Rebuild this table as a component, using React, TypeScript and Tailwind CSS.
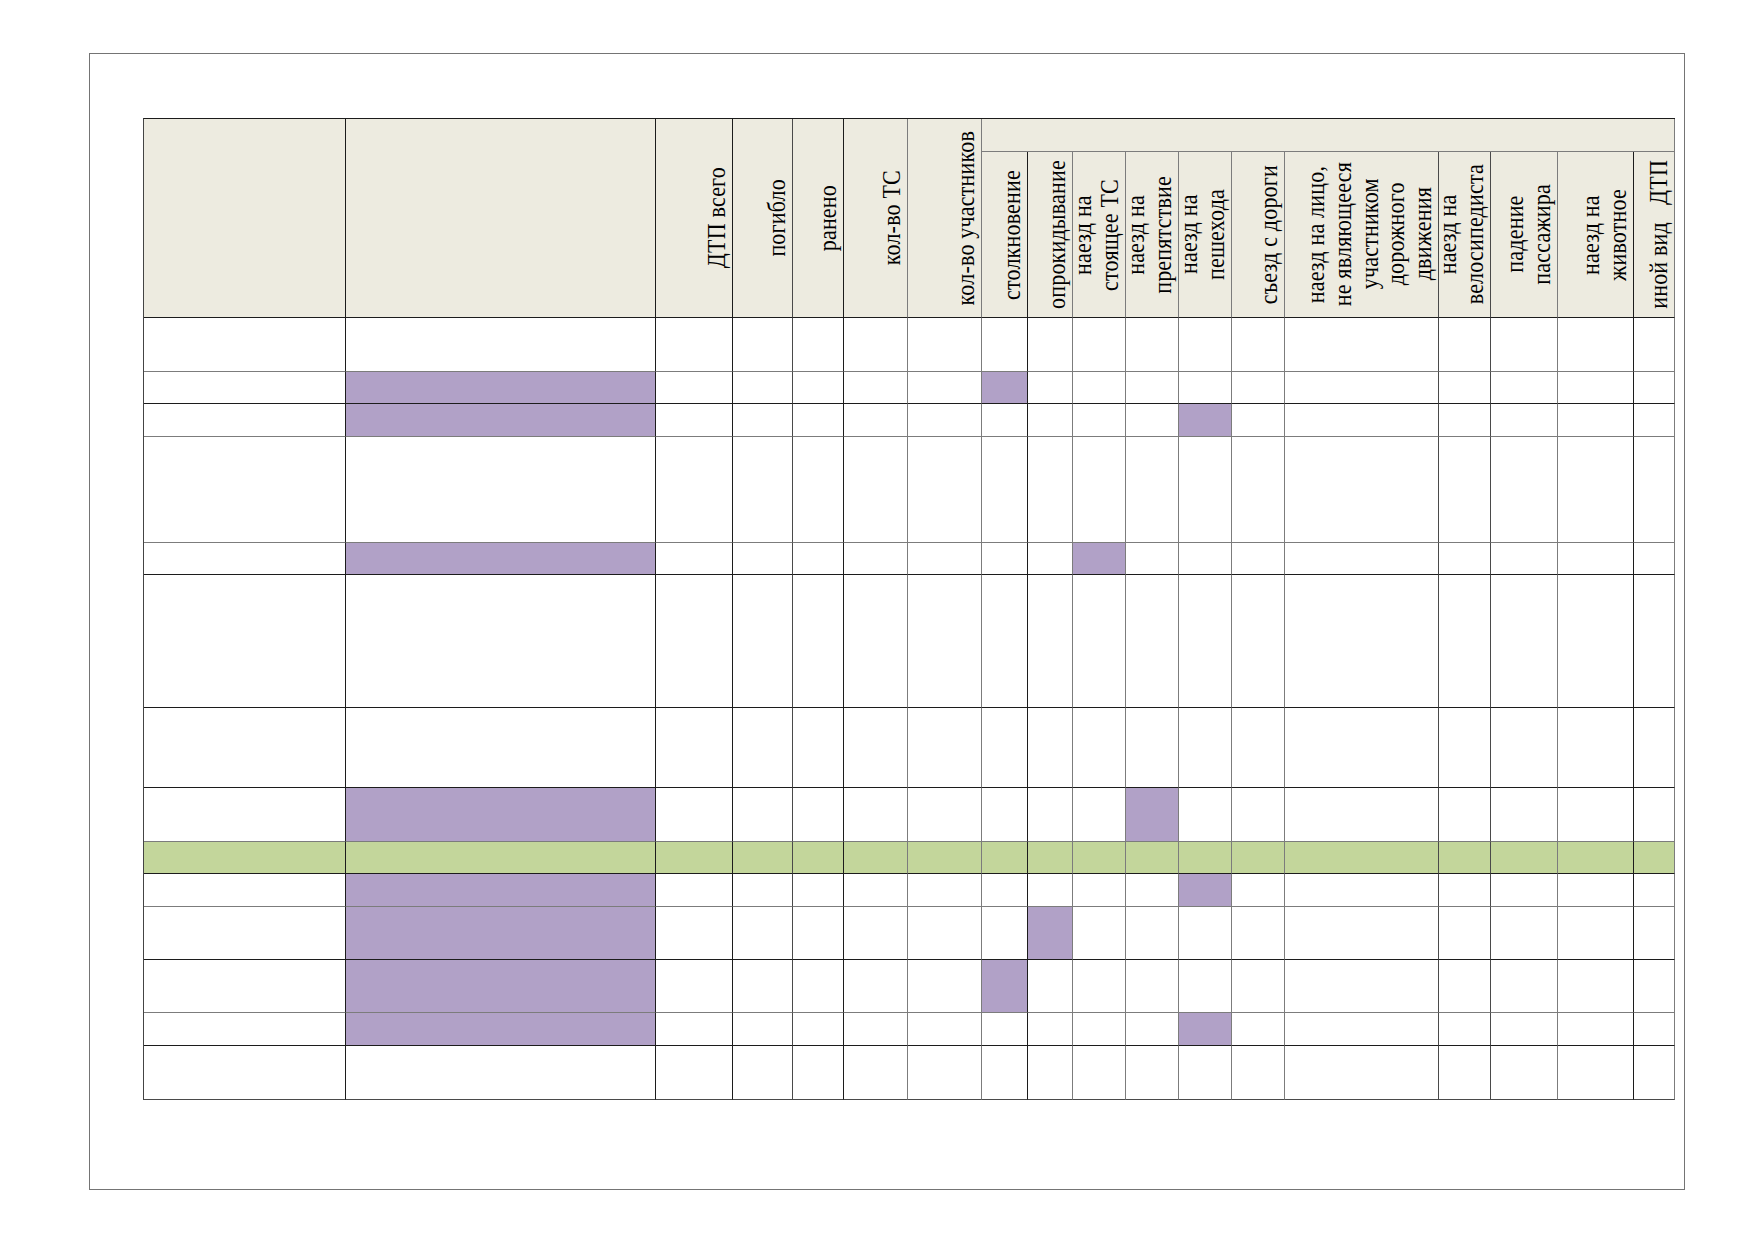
import React from 'react';

// line colours used by the sheet grid
const rightLine: Record<string, string> = {
  k: 'border-r-[#1c1c1c]',
  d: 'border-r-[#4a4a4a]',
  g: 'border-r-[#7c7c7c]',
};

const bottomLine: Record<string, string> = {
  k: 'border-b-[#1c1c1c]',
  d: 'border-b-[#4a4a4a]',
  g: 'border-b-[#7c7c7c]',
};

const columns = ['k', 'k', 'k', 'd', 'k', 'g', 'g', 'k', 'g', 'g', 'g', 'g', 'g', 'd', 'd', 'g', 'k', 'g'];

const mainHeads = ['', '', 'ДТП всего', 'погибло', 'ранено', 'кол-во ТС', 'кол-во участников'];

const subHeads: string[][] = [
  ['столкновение'],
  ['опрокидывание'],
  ['наезд на', 'стоящее ТС'],
  ['наезд на', 'препятствие'],
  ['наезд на', 'пешехода'],
  ['съезд с дороги'],
  ['наезд на лицо,', 'не являющееся', 'участником', 'дорожного', 'движения'],
  ['наезд на', 'велосипедиста'],
  ['падение', 'пассажира'],
  ['наезд на', 'животное'],
  ['иной вид\u00a0\u00a0\u00a0ДТП'],
];

type Row = { line: string; marked: number[]; total?: boolean };

const rows: Row[] = [
  { line: 'g', marked: [] },
  { line: 'k', marked: [1, 7] },
  { line: 'g', marked: [1, 11] },
  { line: 'g', marked: [] },
  { line: 'k', marked: [1, 9] },
  { line: 'k', marked: [] },
  { line: 'k', marked: [] },
  { line: 'g', marked: [1, 10] },
  { line: 'k', marked: [], total: true },
  { line: 'g', marked: [1, 11] },
  { line: 'k', marked: [1, 8] },
  { line: 'g', marked: [1, 7] },
  { line: 'k', marked: [1, 11] },
  { line: 'd', marked: [] },
];

// text runs bottom-to-top; glyphs are a little taller than plain Times in the sheet
const VerticalLabel: React.FC<{ lines: string[] }> = ({ lines }) => (
  <div className="origin-right scale-x-[1.12] pr-[1px]">
    <div className="[writing-mode:vertical-rl] rotate-180 text-center font-['Liberation_Serif',serif] text-[22px] leading-[24px] tracking-[0.2px] text-black">
      {lines.map((line, i) => (
        <div key={i} className="whitespace-nowrap">
          {line}
        </div>
      ))}
    </div>
  </div>
);

const App: React.FC = () => {
  return (
    <div className="w-[1752px] h-[1239px] bg-white pl-[89px] pt-[53px]">
      <div className="w-[1596px] h-[1137px] border border-[#747474] pl-[53px] pt-[64px]">
        <div className="grid w-fit grid-cols-[202px_310px_77px_60px_51px_64px_74px_46px_45px_53px_53px_53px_53px_154px_52px_67px_76px_41px] grid-rows-[33px_166px_54px_32px_33px_106px_32px_133px_80px_54px_32px_33px_53px_53px_33px_54px] border-l border-t border-l-[#444444] border-t-[#1c1c1c]">
          {/* header: main columns span both header rows */}
          {mainHeads.map((head, i) => (
            <div
              key={`h-${i}`}
              className={`row-span-2 flex items-center justify-end border-r border-b bg-[#edebe0] ${rightLine[columns[i]]} ${bottomLine.k}`}
            >
              {head && <VerticalLabel lines={[head]} />}
            </div>
          ))}
          <div className={`col-span-11 border-r border-b bg-[#edebe0] ${rightLine.g} ${bottomLine.g}`}></div>
          {subHeads.map((lines, i) => (
            <div
              key={`s-${i}`}
              className={`flex items-center justify-end border-r border-b bg-[#edebe0] ${rightLine[columns[i + 7]]} ${bottomLine.k}`}
            >
              <VerticalLabel lines={lines} />
            </div>
          ))}

          {/* body */}
          {rows.map((row, r) =>
            columns.map((col, c) => {
              const bg = row.total
                ? 'bg-[#c3d69b]'
                : row.marked.includes(c)
                ? 'bg-[#b1a1c7]'
                : 'bg-white';
              return (
                <div
                  key={`${r}-${c}`}
                  className={`border-r border-b ${bg} ${rightLine[col]} ${bottomLine[row.line]}`}
                ></div>
              );
            })
          )}
        </div>
      </div>
    </div>
  );
};

export default App;
